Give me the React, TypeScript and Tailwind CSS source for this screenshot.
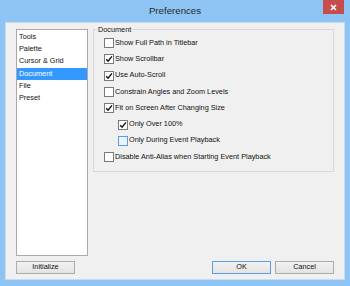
import type { ReactNode } from "react";

const FONT = { fontFamily: '"Liberation Sans", Arial, sans-serif' };

const categories = ["Tools", "Palette", "Cursor & Grid", "Document", "File", "Preset"];

type Option = { label: string; checked: boolean; indent?: boolean; hot?: boolean };

const options: Option[] = [
  { label: "Show Full Path in Titlebar", checked: false },
  { label: "Show Scrollbar", checked: true },
  { label: "Use Auto-Scroll", checked: true },
  { label: "Constrain Angles and Zoom Levels", checked: false },
  { label: "Fit on Screen After Changing Size", checked: true },
  { label: "Only Over 100%", checked: true, indent: true },
  { label: "Only During Event Playback", checked: false, indent: true, hot: true },
  { label: "Disable Anti-Alias when Starting Event Playback", checked: false },
];

function CheckBox({ checked, hot }: { checked: boolean; hot?: boolean }) {
  return (
    <div
      className={
        "w-[10px] h-[10px] shrink-0 border " +
        (hot ? "border-[#5a9fe6] bg-[#eaf4fd]" : "border-[#7a7a7a] bg-white")
      }
    >
      {checked && (
        <svg width="8" height="8" viewBox="0 0 8 8" className="block">
          <path d="M1.2 4.2 L3.1 6.2 L6.9 1.4" fill="none" stroke="#111" strokeWidth="1.4" />
        </svg>
      )}
    </div>
  );
}

function Button({ children, isDefault }: { children: ReactNode; isDefault?: boolean }) {
  return (
    <div
      className={
        "w-[59px] h-[13px] flex items-center justify-center text-[7.3px] text-[#111] border bg-gradient-to-b from-[#f2f2f2] to-[#e3e3e3] " +
        (isDefault ? "border-[#5a9fe6]" : "border-[#acacac]")
      }
    >
      {children}
    </div>
  );
}

export default function App() {
  return (
    <div className="w-[350px] h-[286px] bg-[#8dc4f4] flex flex-col" style={FONT}>
      {/* title bar */}
      <div className="h-[22px] flex items-start relative">
        <div className="flex-1 text-center text-[9.7px] leading-[22px] text-[#2b2b2b]">Preferences</div>
        <div className="absolute right-[6px] top-0 w-[21px] h-[14px] bg-[#c74d4d] flex items-center justify-center">
          <svg width="7" height="7" viewBox="0 0 7 7">
            <path d="M1 1 L6 6 M6 1 L1 6" stroke="#fff" strokeWidth="1.6" />
          </svg>
        </div>
      </div>

      {/* client area */}
      <div className="mx-[5px] mb-[6px] flex-1 bg-[#f0f0f0] border border-[#c9dbec] pl-[10px] pr-[10px] pt-[6px] pb-[5px] flex flex-col">
        <div className="flex-1 flex gap-[5px]">
          <div className="w-[72px] bg-white border border-[#a9a9a9] pt-[0.5px]">
            {categories.map((c) => (
              <div
                key={c}
                className={
                  "h-[12.4px] leading-[12.4px] pl-[2px] text-[7.3px] " +
                  (c === "Document" ? "bg-[#3399ff] text-white" : "text-[#111]")
                }
              >
                {c}
              </div>
            ))}
          </div>

          <div className="flex-1 self-start relative border border-[#d9d9d9] mt-[0px] pt-[5px] pb-[6px] pl-[10px]">
            <div className="absolute -top-[6px] left-[3px] px-[1px] bg-[#f0f0f0] text-[7.3px] leading-[11px] text-[#111]">
              Document
            </div>
            {options.map((o) => (
              <div
                key={o.label}
                className={"h-[16.3px] flex items-center gap-[1px] " + (o.indent ? "pl-[14px]" : "")}
              >
                <CheckBox checked={o.checked} hot={o.hot} />
                <span className="text-[7.3px] text-[#111] whitespace-nowrap">{o.label}</span>
              </div>
            ))}
          </div>
        </div>

        <div className="flex items-end mt-[5px]">
          <Button>Initialize</Button>
          <div className="flex-1" />
          <Button isDefault>OK</Button>
          <div className="w-[4px]" />
          <Button>Cancel</Button>
        </div>
      </div>
    </div>
  );
}
